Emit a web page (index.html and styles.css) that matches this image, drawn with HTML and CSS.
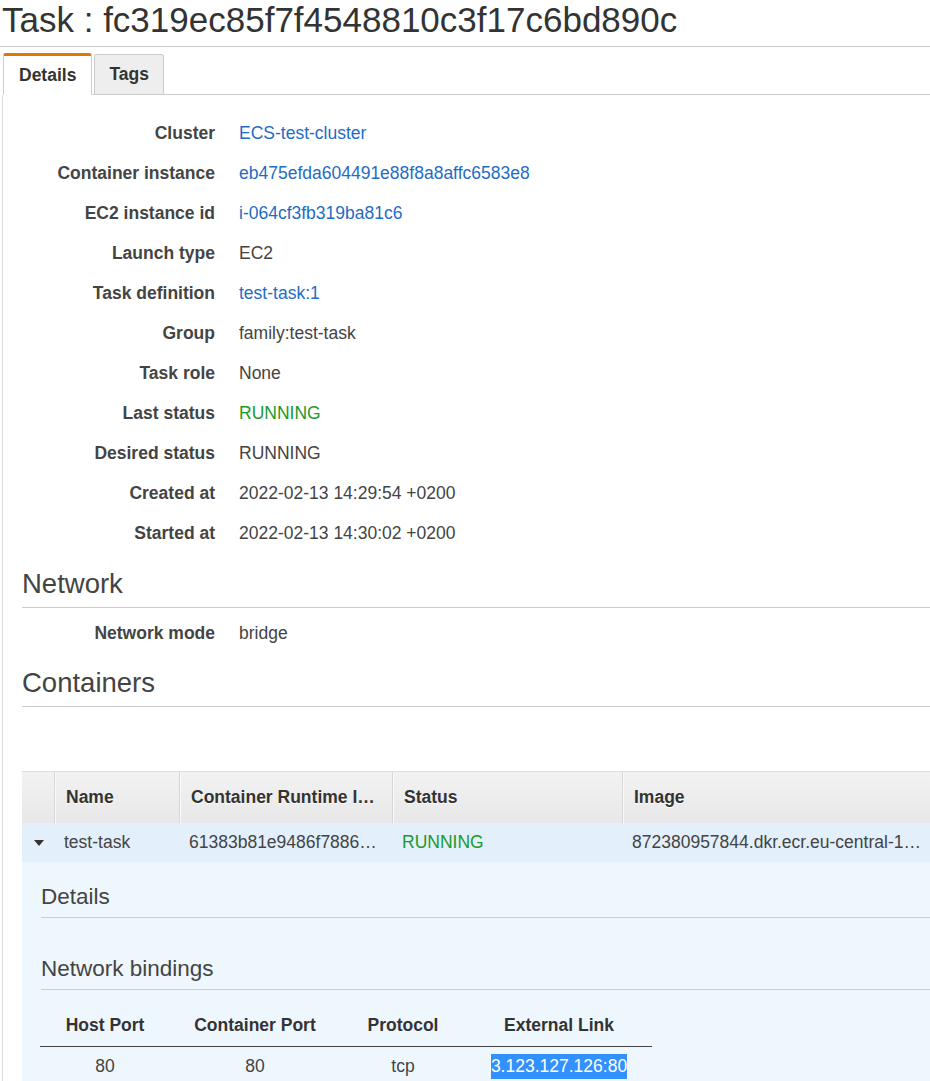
FILE: index.html
```html
<!DOCTYPE html>
<html lang="en">
<head>
<meta charset="utf-8">
<title>Task : fc319ec85f7f4548810c3f17c6bd890c</title>
<link rel="stylesheet" href="styles.css">
</head>
<body>
<h1 class="page-title">Task : fc319ec85f7f4548810c3f17c6bd890c</h1>

<div class="tabs">
  <div class="tab active">Details</div>
  <div class="tab">Tags</div>
</div>

<div class="panel">
  <dl class="kv kv-top">
    <dt>Cluster</dt><dd><a class="link">ECS-test-cluster</a></dd>
    <dt>Container instance</dt><dd><a class="link">eb475efda604491e88f8a8affc6583e8</a></dd>
    <dt>EC2 instance id</dt><dd><a class="link">i-064cf3fb319ba81c6</a></dd>
    <dt>Launch type</dt><dd>EC2</dd>
    <dt>Task definition</dt><dd><a class="link">test-task:1</a></dd>
    <dt>Group</dt><dd>family:test-task</dd>
    <dt>Task role</dt><dd>None</dd>
    <dt>Last status</dt><dd class="ok">RUNNING</dd>
    <dt>Desired status</dt><dd>RUNNING</dd>
    <dt>Created at</dt><dd>2022-02-13 14:29:54 +0200</dd>
    <dt>Started at</dt><dd>2022-02-13 14:30:02 +0200</dd>
  </dl>

  <h2 class="section-title">Network</h2>
  <dl class="kv kv-net">
    <dt>Network mode</dt><dd>bridge</dd>
  </dl>

  <h2 class="section-title section-title-tight">Containers</h2>

  <div class="ctable">
    <div class="chead">
      <div class="hcell hcell-first"></div>
      <div class="hcell">Name</div>
      <div class="hcell">Container Runtime I…</div>
      <div class="hcell">Status</div>
      <div class="hcell">Image</div>
    </div>
    <div class="crow">
      <div class="cell cell-toggle"><span class="caret"></span></div>
      <div class="cell">test-task</div>
      <div class="cell">61383b81e9486f7886…</div>
      <div class="cell ok">RUNNING</div>
      <div class="cell">872380957844.dkr.ecr.eu-central-1…</div>
    </div>
    <div class="cexpand">
      <h3 class="sub-title">Details</h3>
      <h3 class="sub-title sub-title-gap">Network bindings</h3>
      <div class="btable">
        <div class="bhead">Host Port</div>
        <div class="bhead">Container Port</div>
        <div class="bhead">Protocol</div>
        <div class="bhead">External Link</div>
        <div class="bcell">80</div>
        <div class="bcell">80</div>
        <div class="bcell">tcp</div>
        <div class="bcell"><span class="selected">3.123.127.126:80</span></div>
      </div>
    </div>
  </div>
</div>
</body>
</html>
```

FILE: styles.css
```css
html, body {
  margin: 0;
  padding: 0;
  background: #fff;
}

body {
  font-family: "Liberation Sans", Arial, sans-serif;
  font-size: 17.5px;
  color: #444;
  overflow: hidden;
}

.page-title {
  margin: 0;
  padding: 0 0 6px 2px;
  font-size: 35px;
  line-height: 40px;
  font-weight: normal;
  color: #333;
  border-bottom: 1px solid #ccc;
}

.tabs {
  display: flex;
  align-items: flex-end;
  gap: 2px;
  margin: 6px 0 0 3px;
  border-bottom: 1px solid #ccc;
}

.tab {
  box-sizing: border-box;
  height: 40px;
  padding: 0 14px;
  display: flex;
  align-items: center;
  font-weight: bold;
  color: #333;
  background: #eee;
  border: 1px solid #ccc;
  border-bottom: none;
  border-radius: 3px 3px 0 0;
}

.tab.active {
  height: 42px;
  padding: 0 15px;
  background: #fff;
  border-top: 3px solid #e07700;
  border-bottom: 1px solid #fff;
  margin-bottom: -1px;
}

.panel {
  margin-left: 2px;
  border-left: 1px solid #ddd;
  min-height: 1000px;
}

.kv {
  display: grid;
  grid-template-columns: 212px 1fr;
  column-gap: 24px;
  grid-auto-rows: 40px;
  align-items: center;
  margin: 0;
}

.kv-top {
  padding-top: 18px;
}

.kv-net {
  padding-top: 5px;
}

.kv dt {
  text-align: right;
  font-weight: bold;
  color: #444;
}

.kv dd {
  margin: 0;
}

.link {
  color: #1f6cc6;
  text-decoration: none;
}

.ok {
  color: #1b9a2c;
}

.section-title {
  margin: 15px 0 0 19px;
  padding-bottom: 7px;
  font-size: 27.5px;
  line-height: 32px;
  font-weight: normal;
  color: #444;
  border-bottom: 1px solid #ccc;
}

.section-title-tight {
  margin-top: 14px;
}

.ctable {
  margin: 64px 0 0 19px;
}

.chead {
  display: grid;
  grid-template-columns: 32px 125px 213px 230px 1fr;
  height: 52px;
  background: linear-gradient(#f2f2f2, #e8e8e8);
  border-top: 1px solid #ddd;
  box-sizing: border-box;
}

.hcell {
  display: flex;
  align-items: center;
  padding-left: 11px;
  font-weight: bold;
  color: #333;
  text-shadow: 0 1px 0 #fff;
  border-left: 1px solid #d6d6d6;
  box-shadow: inset 1px 0 0 #fafafa;
  white-space: nowrap;
  overflow: hidden;
}

.hcell-first {
  border-left: none;
  box-shadow: none;
}

.crow {
  display: grid;
  grid-template-columns: 32px 125px 213px 230px 1fr;
  height: 39px;
  background: #e3effb;
}

.cell {
  display: flex;
  align-items: center;
  padding-left: 10px;
  white-space: nowrap;
  overflow: hidden;
}

.cell-toggle {
  padding-left: 0;
  justify-content: center;
}

.caret {
  width: 0;
  height: 0;
  border-left: 5px solid transparent;
  border-right: 5px solid transparent;
  border-top: 6px solid #333;
  margin-left: 1px;
}

.cexpand {
  background: #eff7fe;
  padding: 21px 0 20px 19px;
}

.sub-title {
  margin: 0;
  padding-bottom: 6px;
  font-size: 22.5px;
  line-height: 28px;
  font-weight: normal;
  color: #444;
  border-bottom: 1px solid #ccc;
}

.sub-title-gap {
  margin-top: 37px;
}

.btable {
  display: grid;
  grid-template-columns: 130px 170px 126px 186px;
  width: 612px;
  margin: 14px 0 0 -1px;
}

.bhead {
  height: 42px;
  display: flex;
  align-items: center;
  justify-content: center;
  font-weight: bold;
  color: #333;
  border-bottom: 1px solid #444;
}

.bcell {
  height: 39px;
  display: flex;
  align-items: center;
  justify-content: center;
}

.selected {
  background: #3390ff;
  color: #fff;
  line-height: 25px;
}
```
